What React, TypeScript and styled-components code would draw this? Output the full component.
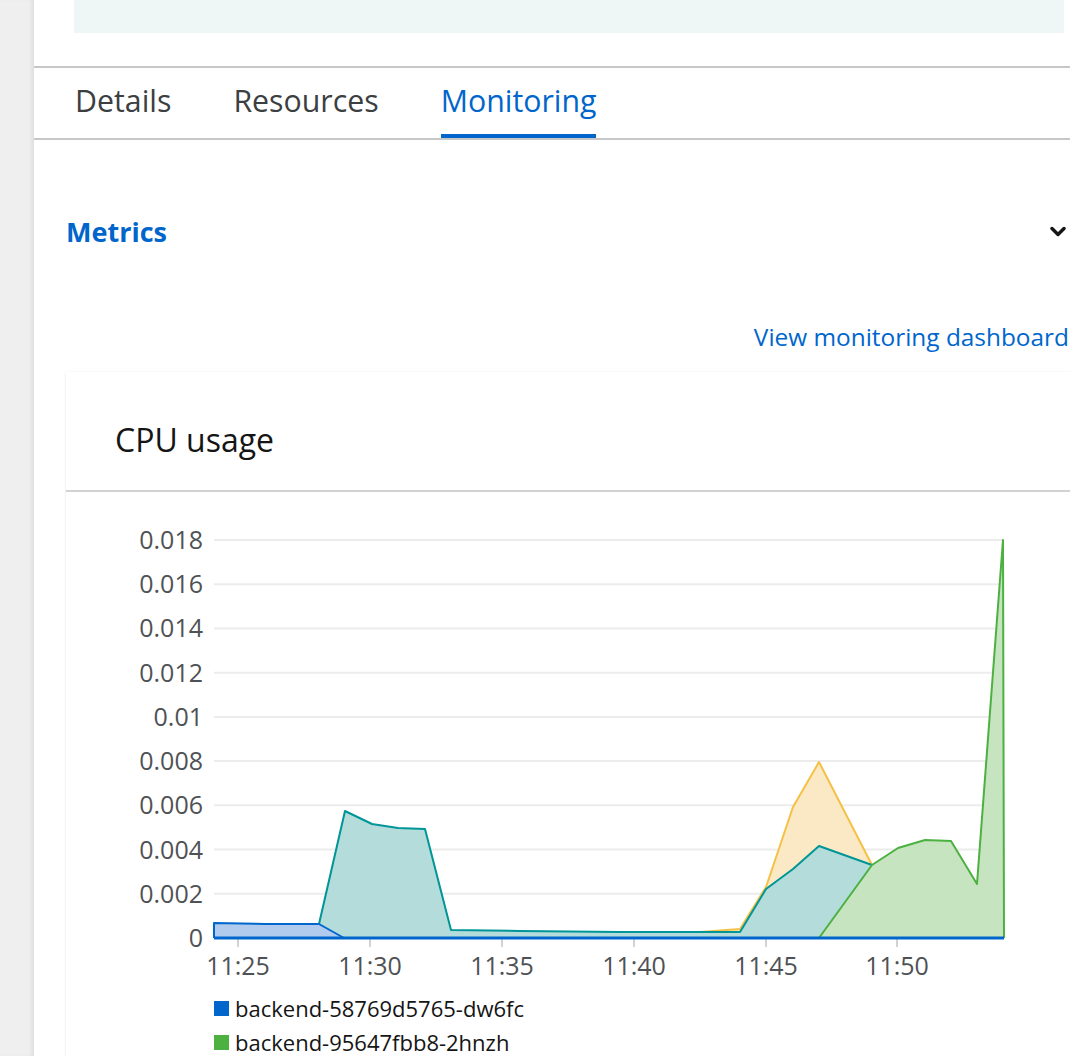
import React from 'react';
import styled, { createGlobalStyle } from 'styled-components';

const GlobalStyle = createGlobalStyle`
  html, body {
    margin: 0;
    padding: 0;
    overflow: hidden;
    background: #ffffff;
    font-family: 'Open Sans', 'Liberation Sans', sans-serif;
  }
`;

const Shell = styled.div`
  display: flex;
  width: 1070px;
  height: 1056px;
  overflow: hidden;
`;

const Rail = styled.div`
  flex: 0 0 34px;
  background: #efefef;
  box-shadow: inset -4px 0 4px -2px rgba(0, 0, 0, 0.08);
`;

const Page = styled.div`
  flex: 0 0 1040px;
  background: #ffffff;
`;

const Banner = styled.div`
  height: 33px;
  margin: 0 10px 33px 40px;
  background: #eef7f6;
`;

const TabBar = styled.div`
  display: flex;
  gap: 62px;
  height: 70px;
  padding-left: 41px;
  border-top: 2px solid #c7c7c7;
  border-bottom: 2px solid #c7c7c7;
`;

const Tab = styled.div<{ $active?: boolean }>`
  display: flex;
  align-items: center;
  font-size: 30.3px;
  color: ${(p) => (p.$active ? '#0066cc' : '#3c3f42')};
  box-shadow: ${(p) => (p.$active ? 'inset 0 -4px 0 #0066cc' : 'none')};
  padding-bottom: 6px;
`;

const Section = styled.div`
  padding-left: 32px;
`;

const SectionHeader = styled.div`
  display: flex;
  align-items: center;
  justify-content: space-between;
  padding-top: 74px;
  padding-right: 8px;
  height: 36px;
`;

const SectionTitle = styled.h3`
  margin: 0;
  font-size: 27px;
  line-height: 36px;
  font-weight: 700;
  color: #0066cc;
`;

const LinkRow = styled.div`
  display: flex;
  justify-content: flex-end;
  margin-top: 70px;
  margin-right: 5px;
`;

const DashLink = styled.a`
  font-size: 24.4px;
  line-height: 34px;
  color: #0066cc;
  text-decoration: none;
  white-space: nowrap;
`;

const Card = styled.div`
  margin-top: 18px;
  margin-right: -40px;
  background: #ffffff;
  box-shadow: 0 1px 2px rgba(3, 3, 3, 0.1), 0 0 2px rgba(3, 3, 3, 0.06);
`;

const CardHeader = styled.div`
  height: 70px;
  padding: 48px 0 0 49px;
  border-bottom: 2px solid #d2d2d2;
`;

const CardTitle = styled.div`
  font-size: 32px;
  line-height: 40px;
  color: #151515;
`;

const CardBody = styled.div`
  padding-bottom: 20px;
`;

const Legend = styled.div`
  display: flex;
  flex-direction: column;
  margin-top: 7px;
  padding-left: 148px;
`;

const LegendItem = styled.div`
  display: flex;
  align-items: center;
  height: 34px;
  font-size: 22px;
  color: #151515;
`;

const Swatch = styled.span<{ $color: string }>`
  width: 15px;
  height: 15px;
  margin-right: 6px;
  background: ${(p) => p.$color};
`;

const Chevron = () => (
  <svg width="16" height="12" viewBox="0 0 16 12">
    <path d="M2 2.5 L8 8.5 L14 2.5" fill="none" stroke="#151515" strokeWidth="3.4" strokeLinecap="round" strokeLinejoin="round" />
  </svg>
);

const BASE = 938;
const STEP = 44.22;
const yTicks = ['0', '0.002', '0.004', '0.006', '0.008', '0.01', '0.012', '0.014', '0.016', '0.018'];
const xTicks = [
  { x: 238, label: '11:25' },
  { x: 370, label: '11:30' },
  { x: 502, label: '11:35' },
  { x: 634, label: '11:40' },
  { x: 766, label: '11:45' },
  { x: 897, label: '11:50' },
];

type Pt = [number, number];

const series: { name: string; line: string; fill: string; pts: Pt[] }[] = [
  {
    name: 'yellow',
    line: '#f4c145',
    fill: '#fbe8c4',
    pts: [
      [451, 932], [700, 932], [740, 929], [766, 887], [793, 807], [819, 762], [872, 865], [898, 936], [1003, 936],
    ],
  },
  {
    name: 'teal',
    line: '#009596',
    fill: '#b3dcdb',
    pts: [
      [319, 924], [345, 811], [372, 824], [398, 828], [425, 829], [451, 930], [520, 931], [620, 932], [740, 932],
      [766, 889], [793, 869], [819, 846], [872, 865], [898, 938],
    ],
  },
  {
    name: 'blue',
    line: '#0066cc',
    fill: '#b1cbef',
    pts: [
      [214, 923], [266, 924], [319, 924], [344, 938],
    ],
  },
  {
    name: 'green',
    line: '#4cb140',
    fill: '#c7e4c0',
    pts: [
      [819, 938], [872, 865], [898, 848], [925, 840], [951, 841], [977, 884], [1003, 540], [1004, 938],
    ],
  },
];

const toPath = (pts: Pt[]) => pts.map((p, i) => `${i ? 'L' : 'M'}${p[0]} ${p[1]}`).join(' ');

const CpuChart = () => (
  <svg width="1010" height="492" viewBox="66 492 1010 492" style={{ display: 'block' }}>
    {yTicks.map((t, i) => {
      const y = BASE - i * STEP;
      return (
        <g key={t}>
          {i > 0 && <line x1="214" x2="1004" y1={y} y2={y} stroke="#ececec" strokeWidth="2" />}
          <text
            x="203"
            y={y + 9}
            textAnchor="end"
            fontSize="25"
            fontFamily="'Open Sans', sans-serif"
            fill="#4f5255"
          >
            {t}
          </text>
        </g>
      );
    })}
    {xTicks.map((t) => (
      <g key={t.label}>
        <line x1={t.x} x2={t.x} y1="939" y2="947" stroke="#d2d2d2" strokeWidth="2" />
        <text x={t.x} y="975" textAnchor="middle" fontSize="25" fontFamily="'Open Sans', sans-serif" fill="#4f5255">
          {t.label}
        </text>
      </g>
    ))}
    {series.map((s) => {
      const first = s.pts[0];
      const last = s.pts[s.pts.length - 1];
      const area = `${toPath(s.pts)} L${last[0]} ${BASE} L${first[0]} ${BASE} Z`;
      return (
        <g key={s.name}>
          <path d={area} fill={s.fill} />
          <path d={s.name === 'blue' ? `M214 ${BASE} ${toPath(s.pts).replace('M', 'L')}` : toPath(s.pts)} fill="none" stroke={s.line} strokeWidth="2" strokeLinejoin="round" />
        </g>
      );
    })}
    <line x1="214" x2="1004" y1={BASE} y2={BASE} stroke="#0066cc" strokeWidth="3" />
  </svg>
);

export default function App() {
  return (
    <>
      <GlobalStyle />
      <Shell>
        <Rail />
        <Page>
          <Banner />
          <TabBar>
            <Tab>Details</Tab>
            <Tab>Resources</Tab>
            <Tab $active>Monitoring</Tab>
          </TabBar>
          <Section>
            <SectionHeader>
              <SectionTitle>Metrics</SectionTitle>
              <Chevron />
            </SectionHeader>
            <LinkRow>
              <DashLink href="#">View monitoring dashboard</DashLink>
            </LinkRow>
            <Card>
              <CardHeader>
                <CardTitle>CPU usage</CardTitle>
              </CardHeader>
              <CardBody>
                <CpuChart />
                <Legend>
                  <LegendItem>
                    <Swatch $color="#0066cc" />
                    backend-58769d5765-dw6fc
                  </LegendItem>
                  <LegendItem>
                    <Swatch $color="#4cb140" />
                    backend-95647fbb8-2hnzh
                  </LegendItem>
                </Legend>
              </CardBody>
            </Card>
          </Section>
        </Page>
      </Shell>
    </>
  );
}
